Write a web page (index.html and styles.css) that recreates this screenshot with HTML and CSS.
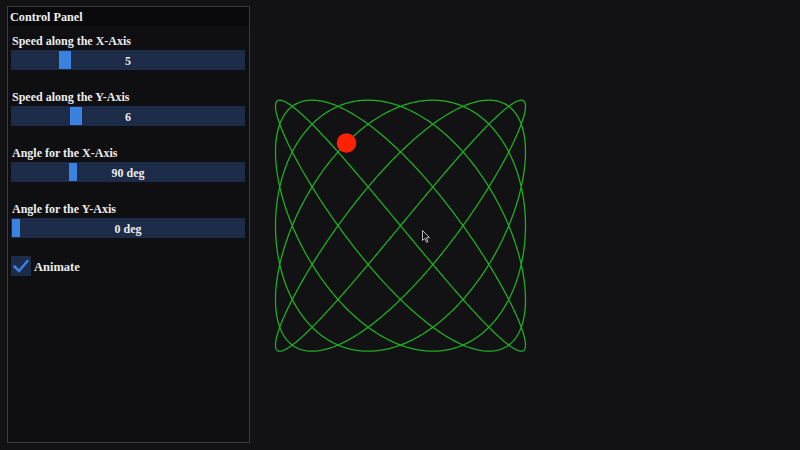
FILE: index.html
```html
<!DOCTYPE html>
<html>
<head>
<meta charset="utf-8">
<link rel="stylesheet" href="styles.css">
</head>
<body>
<div class="app">
  <aside class="panel">
    <div class="panel-title">Control Panel</div>
    <div class="controls">
      <div class="field">
        <div class="label">Speed along the X-Axis</div>
        <div class="slider"><span class="thumb wide" style="left:48px"></span><span class="value">5</span></div>
      </div>
      <div class="field">
        <div class="label">Speed along the Y-Axis</div>
        <div class="slider"><span class="thumb wide" style="left:59px"></span><span class="value">6</span></div>
      </div>
      <div class="field">
        <div class="label">Angle for the X-Axis</div>
        <div class="slider"><span class="thumb" style="left:58px"></span><span class="value">90 deg</span></div>
      </div>
      <div class="field">
        <div class="label">Angle for the Y-Axis</div>
        <div class="slider"><span class="thumb" style="left:1px"></span><span class="value">0 deg</span></div>
      </div>
      <label class="check">
        <span class="box"><svg width="20" height="20" viewBox="0 0 20 20"><path d="M3.5 10.5 L8 15 L16.5 5" fill="none" stroke="#3b82e0" stroke-width="2.6" stroke-linecap="round" stroke-linejoin="round"/></svg></span>
        <span class="check-label">Animate</span>
      </label>
    </div>
  </aside>
  <main class="stage">
    <svg class="canvas" width="550" height="450" viewBox="250 0 550 450">
      <polyline id="curve" fill="none" stroke="#1fae22" stroke-width="1.3" points=""/>
      <circle cx="346.5" cy="143" r="9.8" fill="#ff2200"/>
      <path class="cursor" d="M422.5 230.5 L422.5 240.5 L424.8 238.4 L426.6 242.3 L428 241.6 L426.3 237.8 L429.5 237.6 Z" fill="#111013" stroke="#b9b9b9" stroke-width="1"/>
    </svg>
  </main>
</div>
<script src="script.js"></script>
</body>
</html>
```
FILE: styles.css
```css
html, body {
  margin: 0;
  padding: 0;
  background: #121114;
  width: 800px;
  height: 450px;
  overflow: hidden;
}
.app {
  display: flex;
  width: 800px;
  height: 450px;
  font-family: "Liberation Serif", "DejaVu Serif", serif;
  color: #ececec;
}
.panel {
  margin: 6px 0 0 7px;
  width: 241px;
  height: 435px;
  border: 1px solid #3a3a3d;
  background: #0f0e11;
  display: flex;
  flex-direction: column;
}
.panel-title {
  height: 18px;
  padding-top: 1px;
  line-height: 19px;
  padding-left: 2px;
  background: #09090b;
  font-size: 12.2px;
  font-weight: bold;
  color: #efefef;
}
.controls {
  padding: 5px 4px 0 3px;
  display: flex;
  flex-direction: column;
}
.field {
  display: flex;
  flex-direction: column;
  gap: 1px;
  margin-bottom: 17px;
}
.label {
  height: 17px;
  padding-top: 1px;
  line-height: 18px;
  font-size: 12px;
  font-weight: bold;
  padding-left: 1px;
}
.slider {
  position: relative;
  height: 20px;
  background: #1c2b47;
  display: flex;
  align-items: center;
  justify-content: center;
}
.thumb {
  position: absolute;
  top: 1px;
  width: 8px;
  height: 18px;
  background: #3b82e0;
}
.thumb.wide {
  width: 12px;
}
.value {
  position: relative;
  padding-top: 2px;
  font-size: 12px;
  font-weight: bold;
  color: #ececec;
}
.check {
  margin-top: 1px;
  display: flex;
  align-items: center;
  gap: 3px;
}
.box {
  width: 20px;
  height: 20px;
  background: #1c2b47;
  display: block;
}
.box svg {
  display: block;
}
.check-label {
  padding-top: 2px;
  font-size: 12.5px;
  font-weight: bold;
}
.stage {
  flex: 1;
}
.canvas {
  display: block;
}
```
FILE: script.js
```js
(function () {
  var cx = 400.5, cy = 225.7, rx = 125, ry = 125.5;
  var pts = [];
  var n = 2400;
  for (var i = 0; i <= n; i++) {
    var t = (i / n) * Math.PI * 2;
    var x = cx + rx * Math.sin(5 * t + Math.PI / 2);
    var y = cy + ry * Math.sin(6 * t);
    pts.push(x.toFixed(2) + "," + y.toFixed(2));
  }
  document.getElementById("curve").setAttribute("points", pts.join(" "));
})();
```
